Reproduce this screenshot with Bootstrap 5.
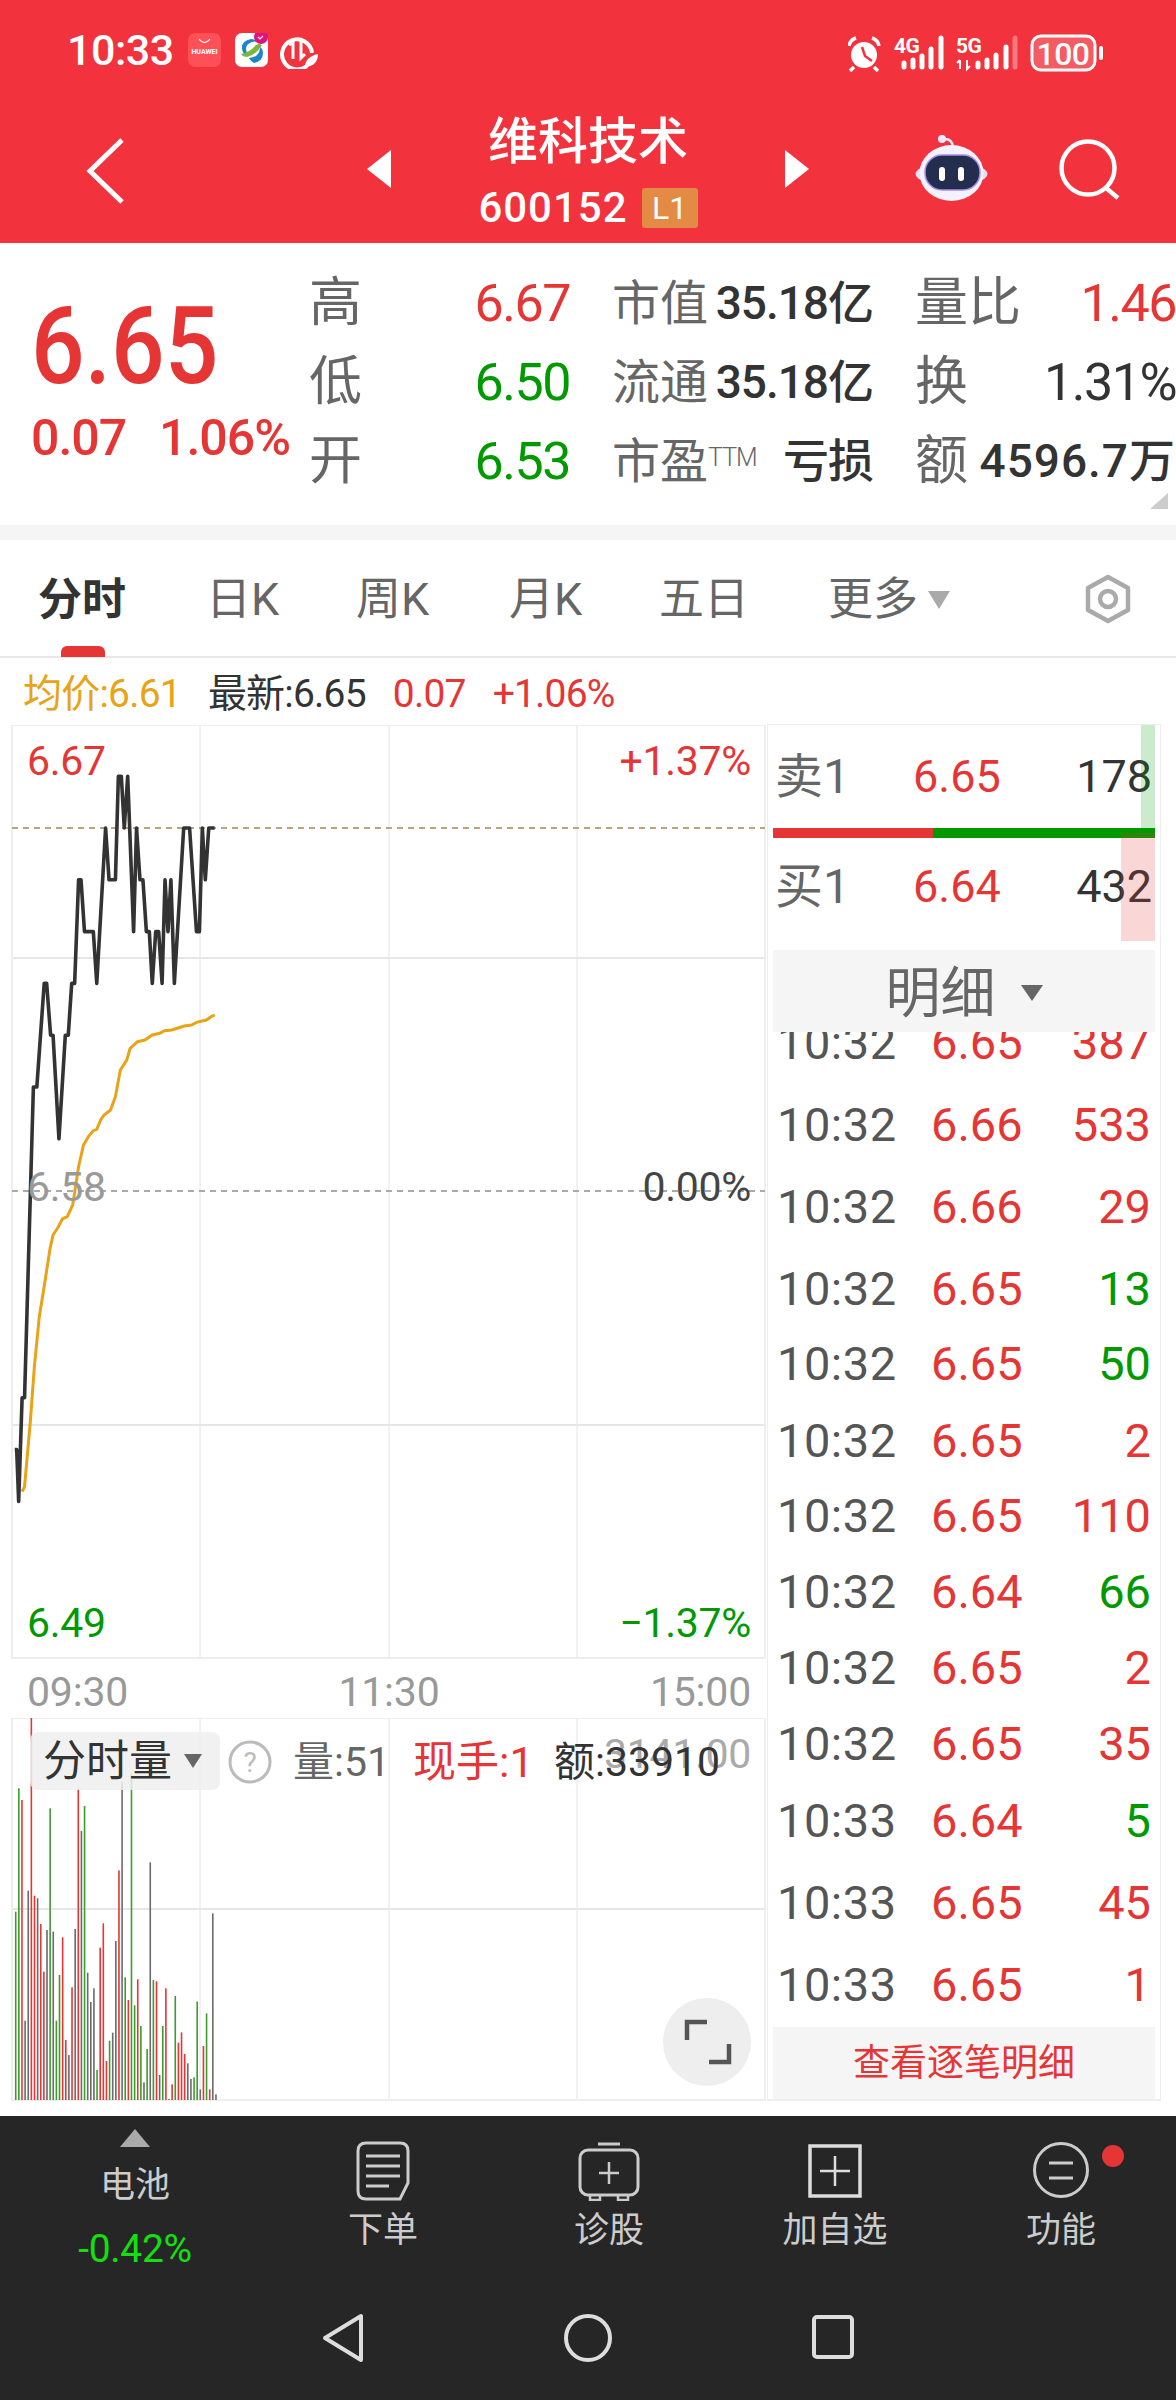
<!DOCTYPE html>
<html lang="zh-CN">
<head>
    <meta charset="UTF-8">
    <meta name="viewport" content="width=device-width, initial-scale=1.0">
    <title>维科技术 600152</title>
    <link rel="stylesheet" href="https://cdn.jsdelivr.net/npm/bootstrap@5.3.2/dist/css/bootstrap.min.css">
    <style>
body {
    width: 1176px;
    height: 2400px;
    overflow: hidden;
    background: #fff;
    font-family: Roboto, "Noto Sans CJK SC", sans-serif;
    color: #333;
}
svg { display: block; }
.up { color: #e53535; }
.down { color: #009900; }
.dim { color: #666; }

/* header */
.top-red { height: 243px; background: #f2323c; color: #fff; }
.status-line { height: 100px; padding: 33px 71px 0 67px; }
.clock-text { font-size: 43px; line-height: 34px; width: 121px; font-weight: 500; letter-spacing: -.5px; }
.title-line { display: grid; grid-template-columns: 1fr 443px 1fr; height: 143px; }
.back-icon { margin: 38px 0 0 75px; }
.side-tri { margin-top: -5px; }
.title-block { margin-top: -1px; }
.stock-name { font-size: 50px; line-height: 60px; font-weight: 500; }
.code-line { margin-top: 14px; }
.stock-code { font-size: 42px; line-height: 44px; letter-spacing: 1px; font-weight: 500; }
.level-tag { background: #e38b45; border-radius: 3px; font-size: 32px; line-height: 40px; width: 56px; text-align: center; margin-left: 14px; }
.title-tools { margin-top: 28px; }

/* quote */
.quote-box { height: 282px; position: relative; }
.quote-left { width: 309px; padding: 55px 0 0 31px; flex: none; }
.big-price { font-size: 108px; line-height: 96px; font-weight: 500; transform: scaleX(.875); transform-origin: left center; }
.sub-price { font-size: 50px; line-height: 56px; margin-top: 16px; width: 259px; letter-spacing: -1px; font-weight: 500; }
.quote-grid { display: grid; grid-template-columns: 261px 261px 261px; column-gap: 42px; grid-auto-rows: 79px; padding-top: 21px; }
.q-label { font-size: 48px; color: #666; white-space: nowrap; }
.q-label-lg { font-size: 53px; }
.q-num { font-size: 52px; letter-spacing: -1.5px; font-weight: 450; }
.q-mid { font-size: 46px; letter-spacing: -1px; white-space: nowrap; font-weight: 500; }
.q-wide { letter-spacing: 1px; }
.ttm-mark { font-size: 25px; vertical-align: 12px; letter-spacing: -1px; font-weight: 300; }
.more-corner { position: absolute; right: 8px; bottom: 16px; width: 0; height: 0; border-left: 18px solid transparent; border-bottom: 16px solid #ccc; }
.gap-bar { height: 15px; background: #f5f5f5; }

/* tabs */
.tab-line { height: 118px; border-bottom: 2px solid #e8e8e8; position: relative; padding-left: 38px; }
.tab-item { font-size: 45px; color: #666; line-height: 120px; white-space: nowrap; }
.tab-on { color: #333; font-weight: 700; width: 168px; font-size: 44px; }
.tab-w { width: 150px; }
.tab-w2 { width: 153px; }
.tab-w3 { width: 169px; }
.tab-pill { position: absolute; left: 61px; bottom: -1px; width: 44px; height: 11px; background: #e53535; border-radius: 6px 6px 0 0; }
.tri-down { display: inline-block; width: 0; height: 0; border-left: 11px solid transparent; border-right: 11px solid transparent; border-top: 18px solid #aaa; margin-left: 10px; vertical-align: 6px; }
.gear-icon { position: absolute; left: 1082px; top: 34px; }
.info-line { height: 66px; padding-left: 23px; font-size: 39px; line-height: 72px; white-space: nowrap; letter-spacing: -.8px; }
.info-line span { margin-right: 27px; }
.avg-text { color: #e8a317; }

/* chart */
.chart-col { width: 767px; flex: none; }
.price-chart { height: 934px; position: relative; margin-top: 1px; }
.vol-chart { height: 398px; position: relative; }
.over-label { position: absolute; font-size: 41px; line-height: 40px; white-space: nowrap; letter-spacing: -.3px; }
.time-axis { height: 59px; padding: 12px 16px 0 27px; font-size: 41px; line-height: 42px; color: #999; letter-spacing: -.2px; }
.vol-chip { position: absolute; left: 30px; top: 14px; width: 190px; height: 58px; background: rgba(238,238,238,.85); border-radius: 8px; font-size: 43px; line-height: 58px; padding-left: 13px; white-space: nowrap; }
.chip-tri { display: inline-block; width: 0; height: 0; border-left: 9px solid transparent; border-right: 9px solid transparent; border-top: 14px solid #666; margin-left: 12px; vertical-align: 8px; }
.help-icon { position: absolute; left: 228px; top: 22px; }
.vol-info { position: absolute; top: 20px; font-size: 41px; line-height: 48px; white-space: nowrap; }
.vol-red { font-size: 43px; }
.ghost-num { color: #aaa; }
.expand-btn { position: absolute; left: 663px; top: 280px; width: 88px; height: 88px; border-radius: 50%; background: #eee; }

/* right panel */
.side-col { width: 394px; flex: none; height: 1377px; position: relative; border: 1px solid #eee; border-bottom-width: 2px; padding: 0 5px; }
.depth-row { font-size: 45px; font-weight: 450; display: flex; align-items: center; padding: 0 3px 0 2px; }
.depth-name { width: 138px; color: #666; white-space: nowrap; font-size: 48px; font-weight: 400; }
.depth-bar { height: 10px; background: #009900; }
.depth-bar-red { height: 10px; width: 160px; background: #e53535; }
.sell-tint { position: absolute; right: 5px; top: 0; width: 14px; height: 103px; background: rgba(0,153,0,.2); }
.buy-tint { position: absolute; right: 5px; top: 108px; width: 34px; height: 108px; background: rgba(229,53,53,.2); }
.detail-head { height: 82px; margin-top: 15px; background: #f5f5f5; color: #666; font-size: 55px; position: relative; z-index: 1; padding-top: 4px; }
.head-tri { display: inline-block; width: 0; height: 0; border-left: 11px solid transparent; border-right: 11px solid transparent; border-top: 16px solid #666; margin-left: 25px; }
.detail-list { height: 995px; overflow: hidden; }
.detail-inner { margin-top: -17px; }
.detail-row { display: flex; font-size: 47px; line-height: 56px; padding: 0 4px 0 4px; font-weight: 450; }
.detail-time { width: 154px; color: #555; font-weight: 400; letter-spacing: .5px; }
.detail-btn { height: 72px; background: #f5f5f5; color: #e53535; font-size: 37px; line-height: 74px; text-align: center; }

/* bottom */
.bottom-dark { height: 284px; background: #262626; color: #ccc; }
.tool-grid { display: grid; grid-template-columns: 270px 226px 226px 226px 226px; height: 178px; }
.tool-item { font-size: 35px; line-height: 44px; text-align: center; position: relative; padding-top: 25px; }
.tool-tri { width: 0; height: 0; border-left: 15px solid transparent; border-right: 15px solid transparent; border-bottom: 18px solid #aaa; margin: 13px auto 0; }
.tool-name { margin-top: 17px; }
.tool-pct { color: #11e011; font-size: 39px; line-height: 44px; margin-top: 19px; letter-spacing: -.3px; }
.tool-item svg { margin: 0 auto 8px; }
.red-dot { position: absolute; left: 154px; top: 29px; width: 22px; height: 22px; border-radius: 50%; background: #e53535; }
.sys-nav { display: grid; grid-template-columns: repeat(3, 245px); justify-content: center; padding-top: 19px; }
    </style>
</head>
<body>
    <div class="top-red">
        <div class="status-line d-flex align-items-start">
            <div class="clock-text">10:33</div>
            <svg width="134" height="36" viewBox="0 0 134 36">
                <rect width="33" height="34" rx="7" fill="#ff5058"/>
                <path d="M11 6q5.500 7 11 0" fill="none" stroke="#fff" stroke-width="1.200"/>
                <text x="16.500" y="21" font-size="7" font-weight="700" fill="#fff" text-anchor="middle" font-family="Roboto">HUAWEI</text>
                <rect x="47" width="33" height="34" rx="7" fill="#fff"/>
                <path d="M63 6q-10 2-9 10 1 6 7 7-3-3-3-7 0-5 6-7 3-1 5 0-2-3-6-3z" fill="#1b87c9"/>
                <path d="M53 21q8-1 15-9 3-2 6 0-6 10-15 12-4 0-6-3z" fill="#7ab83c"/>
                <path d="M66 30q9-2 9-10 0-4-3-6 0 5-3 8-3 3-8 3 2 4 5 5z" fill="#1b87c9"/>
                <circle cx="73" cy="4" r="7" fill="#e0127f"/>
                <path d="M70 4l2 2 3-3" fill="none" stroke="#fff" stroke-width="1.200"/>
                <path d="M122 29a15 15 0 1 1 2-9" fill="none" stroke="#fff" stroke-width="4"/>
                <path d="M105 26V9l-4 3M113 8v17l4-4" fill="none" stroke="#fff" stroke-width="3"/>
                <path d="M117 34q0-10 13-13 0 12-13 13z" fill="#fff"/>
            </svg>
            <svg class="ms-auto" width="257" height="40" viewBox="850 30 257 40">
                <circle cx="866" cy="52" r="13" fill="#fff"/>
                <path d="M864 44l3 9 7 5" fill="none" stroke="#f2323c" stroke-width="2.500"/>
                <path d="M851 43q1-6 7-8M881 43q-1-6-7-8M856 64l-4 4M876 64l4 4" fill="none" stroke="#fff" stroke-width="3.500"/>
                <text x="896" y="50" font-size="21" font-weight="700" fill="#fff" font-family="Roboto" letter-spacing="-.5">4G</text>
                <path d="M906 64v-4M915 64v-7M924 64v-11M933 64v-18M943 64v-29" stroke="#fff" stroke-width="5" stroke-linecap="round"/>
                <text x="958" y="50" font-size="21" font-weight="700" fill="#fff" font-family="Roboto" letter-spacing="-.5">5G</text>
                <path d="M962 66v-9M959 60l3-3M969 57v9l3-3" fill="none" stroke="#fff" stroke-width="2"/>
                <path d="M980 64v-4M989 64v-7M998 64v-12M1008 64v-20" stroke="#fff" stroke-width="5" stroke-linecap="round"/>
                <path d="M1017 64v-29" stroke="#fff" stroke-opacity=".35" stroke-width="5" stroke-linecap="round"/>
                <rect x="1034" y="33" width="63" height="34" rx="9" fill="#fff" fill-opacity=".2" stroke="#fff" stroke-width="3"/>
                <text x="1065" y="62" font-size="32" font-weight="500" fill="#fff" text-anchor="middle" font-family="Roboto" letter-spacing="-.5">100</text>
                <path d="M1103 45v10" stroke="#fff" stroke-width="4" stroke-linecap="round"/>
            </svg>
        </div>
        <div class="title-line">
            <div>
                <svg class="back-icon" width="50" height="70" viewBox="0 0 50 70">
                    <path d="M47 2L15 33l32 31" fill="none" stroke="#fff" stroke-width="5"/>
                </svg>
            </div>
            <div class="d-flex align-items-center justify-content-between">
                <svg class="side-tri" width="24" height="38" viewBox="0 0 24 38"><path d="M24 0v38L0 19z" fill="#fff"/></svg>
                <div class="text-center title-block">
                    <div class="stock-name">维科技术</div>
                    <div class="d-flex align-items-center justify-content-center code-line">
                        <span class="stock-code">600152</span>
                        <span class="level-tag">L1</span>
                    </div>
                </div>
                <svg class="side-tri" width="24" height="38" viewBox="0 0 24 38"><path d="M0 0v38l24-19z" fill="#fff"/></svg>
            </div>
            <div class="d-flex justify-content-end">
                <svg class="title-tools" width="261" height="100" viewBox="0 0 261 100">
                    <circle cx="27" cy="11" r="4" fill="#eeeaff"/>
                    <path d="M30 11q7 0 8 8" fill="none" stroke="#eeeaff" stroke-width="2.500"/>
                    <ellipse cx="36.500" cy="46" rx="36" ry="12" fill="#e3dff5"/>
                    <ellipse cx="36.500" cy="45" rx="32" ry="28" fill="#f4f2ff"/>
                    <rect x="10" y="27" width="55" height="35" rx="17" fill="#232d4d" stroke="#a58ff0" stroke-width="1.500"/>
                    <rect x="24" y="39" width="6" height="14" rx="3" fill="#fff"/>
                    <rect x="43" y="39" width="6" height="14" rx="3" fill="#fff"/>
                    <circle cx="173" cy="40" r="26.500" fill="none" stroke="#fff" stroke-width="4.500"/>
                    <path d="M191 60l12 10" stroke="#fff" stroke-width="4.500" fill="none"/>
                </svg>
            </div>
        </div>
    </div>

    <div class="quote-box d-flex">
        <div class="quote-left">
            <div class="big-price up">6.65</div>
            <div class="sub-price up d-flex justify-content-between"><span>0.07</span><span>1.06%</span></div>
        </div>
        <div class="quote-grid">
            <div class="d-flex justify-content-between align-items-center"><span class="q-label q-label-lg">高</span><span class="q-num up">6.67</span></div>
            <div class="d-flex justify-content-between align-items-center"><span class="q-label">市值</span><span class="q-mid">35.18亿</span></div>
            <div class="d-flex justify-content-between align-items-center"><span class="q-label q-label-lg">量比</span><span class="q-num up">1.46</span></div>
            <div class="d-flex justify-content-between align-items-center"><span class="q-label q-label-lg">低</span><span class="q-num down">6.50</span></div>
            <div class="d-flex justify-content-between align-items-center"><span class="q-label">流通</span><span class="q-mid">35.18亿</span></div>
            <div class="d-flex justify-content-between align-items-center"><span class="q-label q-label-lg">换</span><span class="q-num">1.31%</span></div>
            <div class="d-flex justify-content-between align-items-center"><span class="q-label q-label-lg">开</span><span class="q-num down">6.53</span></div>
            <div class="d-flex justify-content-between align-items-center"><span class="q-label">市盈<span class="ttm-mark">TTM</span></span><span class="q-mid">亏损</span></div>
            <div class="d-flex justify-content-between align-items-center"><span class="q-label q-label-lg">额</span><span class="q-mid q-wide">4596.7万</span></div>
        </div>
        <div class="more-corner"></div>
    </div>
    <div class="gap-bar"></div>

    <div class="tab-line d-flex">
        <div class="tab-item tab-on">分时</div>
        <div class="tab-item tab-w">日K</div>
        <div class="tab-item tab-w2">周K</div>
        <div class="tab-item tab-w">月K</div>
        <div class="tab-item tab-w3">五日</div>
        <div class="tab-item">更多<span class="tri-down"></span></div>
        <div class="tab-pill"></div>
        <svg class="gear-icon" width="52" height="50" viewBox="0 0 52 50">
            <path d="M26 3l20 11v22L26 47 6 36V14z" fill="none" stroke="#aaa" stroke-width="4.500" stroke-linejoin="round"/>
            <circle cx="26" cy="25" r="8" fill="none" stroke="#aaa" stroke-width="4.500"/>
        </svg>
    </div>
    <div class="info-line"><span class="avg-text">均价:6.61</span><span>最新:6.65</span><span class="up">0.07</span><span class="up">+1.06%</span></div>

    <div class="d-flex">
        <div class="chart-col">
            <div class="price-chart">
                <svg id="priceSvg" width="767" height="934"></svg>
                <div class="over-label up" style="left:27px;top:16px">6.67</div>
                <div class="over-label up" style="right:16px;top:16px">+1.37%</div>
                <div class="over-label" style="left:27px;top:442px;color:#999">6.58</div>
                <div class="over-label" style="right:16px;top:442px;color:#444">0.00%</div>
                <div class="over-label down" style="left:27px;top:878px">6.49</div>
                <div class="over-label down" style="right:16px;top:878px">−1.37%</div>
            </div>
            <div class="time-axis d-flex justify-content-between"><span>09:30</span><span>11:30</span><span>15:00</span></div>
            <div class="vol-chart">
                <svg id="volSvg" width="767" height="398"></svg>
                <div class="over-label ghost-num" style="right:16px;top:16px">3141.00</div>
                <div class="vol-chip">分时量<span class="chip-tri"></span></div>
                <svg class="help-icon" width="44" height="44" viewBox="0 0 44 44">
                    <circle cx="22" cy="22" r="20" fill="#fff" stroke="#bbb" stroke-width="3"/>
                    <text x="22" y="32" font-size="28" fill="#bbb" text-anchor="middle" font-family="Roboto">?</text>
                </svg>
                <div class="vol-info dim" style="left:293px">量:51</div>
                <div class="vol-info up vol-red" style="left:413px">现手:1</div>
                <div class="vol-info" style="left:554px">额:33910</div>
                <div class="expand-btn">
                    <svg width="88" height="88" viewBox="0 0 88 88">
                        <path d="M24 42V24h20M66 46v18H46" fill="none" stroke="#555" stroke-width="4.500"/>
                    </svg>
                </div>
            </div>
        </div>

        <div class="side-col">
            <div class="depth-row" style="height:103px">
                <span class="depth-name">卖1</span><span class="up">6.65</span><span class="ms-auto">178</span>
            </div>
            <div class="d-flex"><div class="depth-bar-red"></div><div class="depth-bar flex-grow-1"></div></div>
            <div class="depth-row" style="height:97px">
                <span class="depth-name">买1</span><span class="up">6.64</span><span class="ms-auto">432</span>
            </div>
            <div class="sell-tint"></div>
            <div class="buy-tint"></div>
            <div class="detail-head d-flex align-items-center justify-content-center">明细<span class="head-tri"></span></div>
            <div class="detail-list"><div class="detail-inner" id="detailRows"></div></div>
            <div class="detail-btn">查看逐笔明细</div>
        </div>
    </div>

    <div class="bottom-dark">
        <div class="tool-grid">
            <div class="tool-item" style="padding-top:0">
                <div class="tool-tri"></div>
                <div class="tool-name">电池</div>
                <div class="tool-pct">-0.42%</div>
            </div>
            <div class="tool-item">
                <svg width="54" height="60" viewBox="0 0 54 60">
                    <path d="M10 2h34q8 0 8 8v32l-8 16H10q-8 0-8-8V10q0-8 8-8z" fill="none" stroke="#ccc" stroke-width="3"/>
                    <path d="M10 15h34M10 25h34M10 35h34M10 45h23" stroke="#ccc" stroke-width="3"/>
                </svg>
                下单
            </div>
            <div class="tool-item">
                <svg width="62" height="60" viewBox="0 0 62 60">
                    <path d="M20 3h22" stroke="#ccc" stroke-width="3"/>
                    <rect x="2" y="9" width="58" height="45" rx="8" fill="none" stroke="#ccc" stroke-width="3"/>
                    <path d="M31 21v22M21 32h20" stroke="#ccc" stroke-width="2.500"/>
                    <path d="M12 54v5h10v-5M40 54v5h10v-5" stroke="#ccc" stroke-width="2.500" fill="none"/>
                </svg>
                诊股
            </div>
            <div class="tool-item">
                <svg width="54" height="60" viewBox="0 0 54 60">
                    <rect x="2" y="5" width="50" height="50" fill="none" stroke="#ddd" stroke-width="3.500"/>
                    <path d="M27 15v30M12 30h30" stroke="#ddd" stroke-width="2.500"/>
                </svg>
                加自选
            </div>
            <div class="tool-item">
                <svg width="58" height="60" viewBox="0 0 58 60">
                    <circle cx="29" cy="29" r="26.500" fill="none" stroke="#ccc" stroke-width="3"/>
                    <path d="M17 22h24M17 37h24" stroke="#ccc" stroke-width="3"/>
                </svg>
                功能
                <div class="red-dot"></div>
            </div>
        </div>
        <div class="sys-nav">
            <div class="d-flex justify-content-center">
                <svg width="44" height="50" viewBox="0 0 44 50"><path d="M40 3v44L4 25z" fill="none" stroke="#ddd" stroke-width="4" stroke-linejoin="round"/></svg>
            </div>
            <div class="d-flex justify-content-center">
                <svg width="48" height="50" viewBox="0 0 48 50"><circle cx="24" cy="25" r="22" fill="none" stroke="#ddd" stroke-width="4"/></svg>
            </div>
            <div class="d-flex justify-content-center">
                <svg width="44" height="50" viewBox="0 0 44 50"><rect x="3" y="4" width="38" height="40" rx="3" fill="none" stroke="#ddd" stroke-width="4"/></svg>
            </div>
        </div>
    </div>

    <script>
        // chart data was read off in 2x wide coordinates, sx turns it into page px
        const sx = x => x / 2.036;
        const NS = 'http://www.w3.org/2000/svg';
        const priceY = p => 103 + (6.65 - p) * 100 * 51.8;

        function add(svg, tag, attrs) {
            const el = document.createElementNS(NS, tag);
            Object.keys(attrs).forEach(k => el.setAttribute(k, attrs[k]));
            svg.appendChild(el);
        }

        function drawGrid(svg, height, rows) {
            [200, 389, 577].forEach(x => add(svg, 'line', { x1: x, x2: x, y1: 0, y2: height, stroke: '#e4e4e4', 'stroke-width': 1 }));
            rows.forEach(y => add(svg, 'line', { x1: 12, x2: 765, y1: y, y2: y, stroke: '#e6e6e6', 'stroke-width': 2 }));
            add(svg, 'rect', { x: 12, y: rows[0], width: 753, height: rows[rows.length - 1] - rows[0], fill: 'none', stroke: '#eee', 'stroke-width': 2 });
        }

        const line = [[30,6.53],[34,6.53],[38,6.52],[45,6.54],[50,6.54],[68,6.60],[75,6.60],[90,6.62],[95,6.62],[103,6.61],[108,6.61],[120,6.59],[133,6.61],[139,6.61],[146,6.62],[152,6.62],[160,6.64],[165,6.64],[172,6.63],[190,6.63],[197,6.62],[215,6.65],[222,6.64],[235,6.64],[241,6.66],[247,6.66],[253,6.65],[260,6.66],[272,6.63],[278,6.65],[285,6.64],[291,6.64],[298,6.63],[304,6.63],[310,6.62],[317,6.63],[323,6.63],[330,6.62],[336,6.64],[342,6.63],[348,6.64],[355,6.62],[374,6.65],[386,6.65],[400,6.63],[406,6.63],[412,6.65],[418,6.64],[425,6.65],[437,6.65]];
        const avg = [[45,2315],[50,2300],[62,2100],[70,1940],[80,1790],[92,1680],[102,1585],[108,1545],[117,1525],[127,1497],[137,1490],[148,1455],[160,1340],[170,1275],[180,1250],[190,1232],[197,1228],[205,1200],[212,1185],[225,1170],[235,1130],[245,1050],[258,1020],[265,985],[280,965],[295,960],[310,945],[325,940],[335,932],[350,930],[375,918],[390,915],[400,907],[420,900],[430,890],[437,885]];

        const priceSvg = document.getElementById('priceSvg');
        drawGrid(priceSvg, 934, [0, 233, 700, 933]);
        add(priceSvg, 'line', { x1: 12, x2: 765, y1: 103, y2: 103, stroke: '#b8a47e', 'stroke-width': 2, 'stroke-dasharray': '6 5' });
        add(priceSvg, 'line', { x1: 12, x2: 765, y1: 466, y2: 466, stroke: '#aaa', 'stroke-width': 2, 'stroke-dasharray': '6 5' });
        add(priceSvg, 'polyline', { points: avg.map(p => sx(p[0]) + ',' + (p[1] / 3 - 5)).join(' '), fill: 'none', stroke: '#e8a317', 'stroke-width': 3 });
        add(priceSvg, 'polyline', { points: line.map(p => sx(p[0]) + ',' + priceY(p[1])).join(' '), fill: 'none', stroke: '#333', 'stroke-width': 3.600, 'stroke-linejoin': 'round' });

        // volume bars: top y in zoomed px, r/g/k colour per minute
        const bars = '725g 355g 390r 1052k 662k 143r 677r 685k 762r 905r 780k 415g 785k 1052g 915g 802r 1110r 1155k 952r 777k 355r 483k 408g 908k 996k 955k 1200g 833r 760r 1173r 1112g 1088k 813k 601r 335k 922g 990r 310g 1006g 928r 1068g 1237k 1137g 577k 930g 934r 1215k 1068g 955r 1287k 1243r 978g 1118r 1087r 1152r 1180k 1227k 1222g 995g 1258k 1128r 1030g 1258r 730k 1273k'.split(' ');
        const barColors = { r: '#e53535', g: '#3c9c2e', k: '#6b6b6b' };
        const volSvg = document.getElementById('volSvg');
        drawGrid(volSvg, 383, [0, 191, 382]);
        bars.forEach((b, i) => {
            const top = parseInt(b) / 3 - 48;
            const x = sx(32 + 6.37 * i);
            add(volSvg, 'rect', { x: x - 0.8, y: top, width: 1.6, height: 382 - top, fill: barColors[b.slice(-1)] });
        });

        const details = [
            ['10:32','6.65','387','up',82],['10:32','6.66','533','up',82],['10:32','6.66','29','up',82],
            ['10:32','6.65','13','down',75],['10:32','6.65','50','down',77],['10:32','6.65','2','up',75],
            ['10:32','6.65','110','up',76],['10:32','6.64','66','down',76],['10:32','6.65','2','up',76],
            ['10:32','6.65','35','up',77],['10:33','6.64','5','down',82],['10:33','6.65','45','up',82],
            ['10:33','6.65','1','up',82]
        ];
        const rows = document.getElementById('detailRows');
        details.forEach(d => {
            const row = document.createElement('div');
            row.className = 'detail-row';
            row.style.height = d[4] + 'px';
            row.innerHTML = `<span class="detail-time">${d[0]}</span><span class="up">${d[1]}</span><span class="ms-auto ${d[3]}">${d[2]}</span>`;
            rows.appendChild(row);
        });
    </script>
    <script src="https://cdn.jsdelivr.net/npm/bootstrap@5.3.2/dist/js/bootstrap.bundle.min.js"></script>
</body>
</html>
